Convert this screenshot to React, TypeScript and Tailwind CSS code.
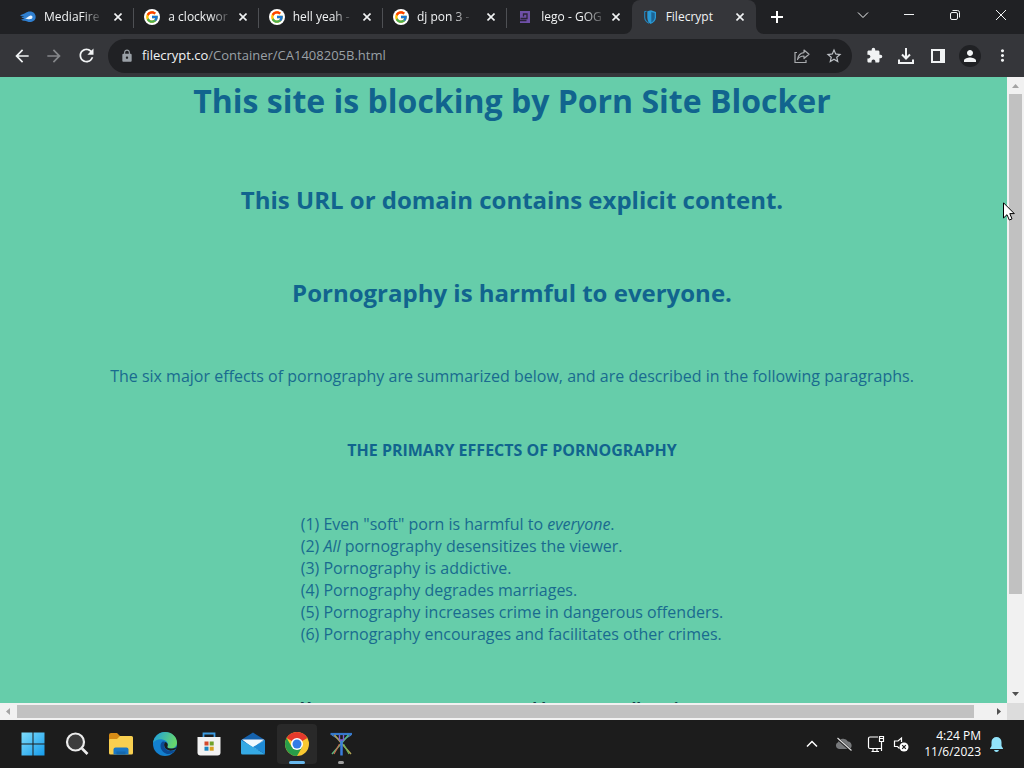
import type { ReactNode } from "react";
import { FcGoogle } from "react-icons/fc";
import {
  MdArrowBack,
  MdArrowForward,
  MdExtension,
  MdLock,
  MdMoreVert,
  MdPerson,
  MdRefresh,
  MdStarOutline,
} from "react-icons/md";

const MediaFireIcon = () => (
  <svg viewBox="0 0 16 16" className="size-4">
    <path d="M0 6.500C2 5 3.500 5.300 5 4.200C8 2 12 1.700 14.500 4.500C17 8 15.500 12.500 11 13C8 13.300 6.500 11.500 4 11.700C2.500 11.800 1.500 11.200 1.300 10.300C2.500 10.400 3.600 9.800 4.200 9C3 9.300 1.800 9 1.300 7.800C2.500 8 3.600 7.500 4.200 7C2.800 7.200 1.500 7 0 6.500Z" fill="#2f7fd0" />
    <path d="M5 9.400C7 9.400 8 7.200 10.500 6.500C12.800 6 13.300 9.500 11 10C8.500 10.500 7 9.700 5 9.400Z" fill="#e8f4ff" />
  </svg>
);

const GoogleIcon = () => (
  <span className="flex size-4 shrink-0 items-center justify-center rounded-full bg-white">
    <FcGoogle size={14} />
  </span>
);

const LegoIcon = () => (
  <svg viewBox="0 0 16 16" className="size-4 shrink-0" fill="none">
    <path d="M3 2H13V14H3Z" fill="#6f50a8" />
    <path d="M6.500 7.500V5H10V9.500H3.500M3 11.500H9.500" stroke="#2b2438" strokeWidth="1.300" />
  </svg>
);

const ShieldIcon = () => (
  <svg viewBox="0 0 16 16" className="size-4">
    <path d="M4.500 2.200L2.700 2.800V8.500C2.800 11 4.500 13 7 14.200" fill="none" stroke="#2384bd" strokeWidth="1.200" />
    <path d="M5.300 2.300L9 1.300L14 3V8.500C13.800 11.500 12 13.600 8.500 15C6.300 13.500 5.300 11 5.300 8.500Z" fill="#2a9ad6" />
    <path d="M9.300 3L12.700 4V8.500C12.500 10.700 11.500 12.300 9.300 13.400Z" fill="#1c6494" />
  </svg>
);

const tabs = [
  { title: "MediaFire", icon: <MediaFireIcon /> },
  { title: "a clockwor", icon: <GoogleIcon /> },
  { title: "hell yeah -", icon: <GoogleIcon /> },
  { title: "dj pon 3 -", icon: <GoogleIcon /> },
  { title: "lego - GOG", icon: <LegoIcon /> },
  { title: "Filecrypt", icon: <ShieldIcon />, active: true },
];

function TabBar() {
  return (
    <div className="flex h-[34px] shrink-0 items-stretch bg-[#202124] pl-2.5 text-xs text-[#f1f3f4]">
      <div role="tablist" className="flex w-[746px]">
        {tabs.map((tab, i) => (
          <div
            key={tab.title}
            role="tab"
            aria-selected={!!tab.active}
            className={
              tab.active
                ? "relative flex min-w-0 flex-1 items-center rounded-t-lg bg-[#35363a] px-2.5"
                : "relative flex min-w-0 flex-1 items-center px-2.5"
            }
          >
            {tab.icon}
            <span
              className={
                tab.active
                  ? "ml-2 whitespace-nowrap"
                  : "ml-2 whitespace-nowrap [mask-image:linear-gradient(to_right,#000_70%,#0003)]"
              }
            >
              {tab.title}
            </span>
            <button aria-label={`Close ${tab.title}`} className="ml-auto flex size-3 items-center justify-center">
              <svg viewBox="0 0 8 8" className="size-2" stroke="#f1f3f4" strokeWidth="1.600">
                <path d="M.5 .5L7.500 7.500M7.500 .5L.5 7.500" />
              </svg>
            </button>
            {i < 4 && <span className="absolute right-0 top-2 h-5 w-px bg-[#4e5054]" />}
            {tab.active && (
              <>
                <svg viewBox="0 0 8 8" className="absolute -left-2 bottom-0 size-2" fill="#35363a">
                  <path d="M8 0V8H0A8 8 0 0 0 8 0Z" />
                </svg>
                <svg viewBox="0 0 8 8" className="absolute -right-2 bottom-0 size-2" fill="#35363a">
                  <path d="M0 0V8H8A8 8 0 0 1 0 0Z" />
                </svg>
              </>
            )}
          </div>
        ))}
      </div>
      <button aria-label="New tab" className="ml-3.5 flex w-3.5 items-center justify-center">
        <svg viewBox="0 0 12 12" className="size-3" stroke="#fff" strokeWidth="2">
          <path d="M6 0V12M0 6H12" />
        </svg>
      </button>
      <div className="ml-auto flex h-[30px]">
        <WindowButton label="Search tabs">
          <path d="M1 3.500L6 8.500L11 3.500" />
        </WindowButton>
        <WindowButton label="Minimize">
          <path d="M1 5.500H11" />
        </WindowButton>
        <WindowButton label="Restore">
          <rect x="1.500" y="3.500" width="7" height="7" rx="1.500" />
          <path d="M3.500 1.500H8.500Q10.500 1.500 10.500 3.500V8.500" />
        </WindowButton>
        <WindowButton label="Close">
          <path d="M1 1L11 11M11 1L1 11" />
        </WindowButton>
      </div>
    </div>
  );
}

function WindowButton({ label, children }: { label: string; children: ReactNode }) {
  return (
    <button aria-label={label} className="flex w-[46px] items-center justify-center">
      <svg viewBox="0 0 12 12" className="size-3" fill="none" stroke="#f1f3f4">
        {children}
      </svg>
    </button>
  );
}

function ToolButton({ label, children }: { label: string; children: ReactNode }) {
  return (
    <button aria-label={label} className="flex h-8 w-8 items-center justify-center">
      {children}
    </button>
  );
}

function Toolbar() {
  return (
    <div className="flex h-[43px] shrink-0 items-center bg-[#35363a] px-1.5 text-[#f1f3f4]">
      <ToolButton label="Back">
        <MdArrowBack size={20} />
      </ToolButton>
      <ToolButton label="Forward">
        <MdArrowForward size={20} className="text-[#85878a]" />
      </ToolButton>
      <ToolButton label="Reload">
        <MdRefresh size={21} />
      </ToolButton>
      <div className="ml-1.5 mr-1.5 flex h-[34px] flex-1 items-center rounded-full bg-[#202124] pl-3 pr-0.5 text-[#9aa0a6]">
        <MdLock size={14} />
        <a href="#url" className="ml-2 flex-1 text-[13px] text-[#9aa0a6]">
          <span className="text-[#f1f3f4]">filecrypt.co</span>/Container/CA1408205B.html
        </a>
        <ToolButton label="Share">
          <svg viewBox="0 0 16 16" className="size-4" fill="none" stroke="#a9abae" strokeWidth="1.200">
            <path d="M3 4.500H1V14.500H12V12" />
            <path d="M10 2L15 6.300L10 10.500V8C7 8 5 9 3.500 11.500C4 7.500 6.500 5 10 4.600Z" strokeLinejoin="round" />
          </svg>
        </ToolButton>
        <ToolButton label="Bookmark">
          <MdStarOutline size={18} className="text-[#bdc1c6]" />
        </ToolButton>
      </div>
      <ToolButton label="Extensions">
        <MdExtension size={17} />
      </ToolButton>
      <ToolButton label="Downloads">
        <svg viewBox="0 0 16 16" className="size-4" fill="none" stroke="currentColor" strokeWidth="2">
          <path d="M8 0V10M4 6.500L8 10.500L12 6.500M1 11.500V15H15V11.500" />
        </svg>
      </ToolButton>
      <ToolButton label="Side panel">
        <svg viewBox="0 0 14 14" className="size-3.5">
          <path d="M0 0H14V14H0ZM2 2V12H9V2Z" fill="currentColor" fillRule="evenodd" />
        </svg>
      </ToolButton>
      <ToolButton label="Profile">
        <span className="flex size-[22px] items-center justify-center rounded-full bg-[#202124]">
          <MdPerson size={18} />
        </span>
      </ToolButton>
      <ToolButton label="Menu">
        <MdMoreVert size={19} />
      </ToolButton>
    </div>
  );
}

function BlockedPage() {
  return (
    <main className="min-w-0 flex-1 overflow-hidden bg-[#66cdaa] text-[#11648e]">
      <div className="w-[calc(100%+17px)] pt-0.5 text-center text-base leading-[22px]">
        <h1 className="text-[32px] font-bold leading-[44px]">This site is blocking by Porn Site Blocker</h1>
        <h2 className="mt-15 text-2xl font-bold leading-[33px]">This URL or domain contains explicit content.</h2>
        <h2 className="mt-15 text-2xl font-bold leading-[33px]">Pornography is harmful to everyone.</h2>
        <p className="mt-14 text-[#196b8f]">
          The six major effects of pornography are summarized below, and are described in the following paragraphs.
        </p>
        <h3 className="mt-[52px] font-bold">THE PRIMARY EFFECTS OF PORNOGRAPHY</h3>
        <div className="mt-[52px] flex justify-center text-left">
          <div>
            <ol className="text-[#196b8f]">
              <li>(1) Even "soft" porn is harmful to <em>everyone</em>.</li>
              <li>(2) <em>All</em> pornography desensitizes the viewer.</li>
              <li>(3) Pornography is addictive.</li>
              <li>(4) Pornography degrades marriages.</li>
              <li>(5) Pornography increases crime in dangerous offenders.</li>
              <li>(6) Pornography encourages and facilitates other crimes.</li>
            </ol>
            <h3 className="mt-[52px] font-bold text-[#12404a]">You can overcome a porn and become well again</h3>
          </div>
        </div>
      </div>
    </main>
  );
}

const Arrow = ({ d, fill }: { d: string; fill: string }) => (
  <svg viewBox="0 0 17 17" className="size-[17px] shrink-0" fill={fill}>
    <path d={d} />
  </svg>
);

function Taskbar() {
  return (
    <footer className="flex h-12 shrink-0 items-center bg-[#1c1c1c] pl-[11px] pr-5 text-white">
      <TaskButton label="Start">
        <svg viewBox="0 0 24 24" className="size-6">
          <defs>
            <linearGradient id="win" x1="0" y1="0" x2="1" y2="1">
              <stop stopColor="#7edcfb" />
              <stop offset="1" stopColor="#159cec" />
            </linearGradient>
          </defs>
          <path d="M.5 .5H11.500V11.500H.5ZM12.500 .5H23.500V11.500H12.500ZM.5 12.500H11.500V23.500H.5ZM12.500 12.500H23.500V23.500H12.500Z" fill="url(#win)" />
        </svg>
      </TaskButton>
      <TaskButton label="Search">
        <svg viewBox="0 0 24 24" className="size-6" stroke="#ececec">
          <circle cx="10.500" cy="10" r="8.500" fill="#3c3c3c" strokeWidth="2.200" />
          <path d="M17 16.500L22.500 22" strokeWidth="2.700" />
        </svg>
      </TaskButton>
      <TaskButton label="File Explorer">
        <svg viewBox="0 0 24 24" className="size-6">
          <path d="M0 3Q0 1 2 1H8L11 4V9H0Z" fill="#d68c16" />
          <path d="M1 7H8L11 4H22.500Q24 4 24 5.500V21Q24 22.500 22.500 22.500H1.500Q0 22.500 0 21V8Q0 7 1 7Z" fill="#f8cf50" />
          <path d="M4.500 22.500V17.500Q4.500 15.500 6.500 15.500H17.500Q19.500 15.500 19.500 17.500V22.500Z" fill="#1977c5" />
          <path d="M7.500 22.500V19.500H16.500V22.500Z" fill="#1568ad" />
        </svg>
      </TaskButton>
      <TaskButton label="Edge">
        <svg viewBox="0 0 24 24" className="size-6">
          <defs>
            <linearGradient id="edgeTop" x1="0" y1="0" x2="1" y2=".3">
              <stop stopColor="#1b9de2" />
              <stop offset="1" stopColor="#66d66e" />
            </linearGradient>
          </defs>
          <circle cx="12" cy="12" r="12" fill="#1380cf" />
          <path d="M0 11C1 4.500 6 0 12 0C19 0 24 5 24 10.500C24 14.500 21 16.500 17.500 16.500C15 16.500 13.700 15.500 14.500 14.300C15.500 12.500 14.700 8.500 9.500 7.500C5.500 6.800 1.500 8.500 0 11Z" fill="url(#edgeTop)" />
          <path d="M9 10C6 13 7.500 20 14 22C17.500 22.500 21 20.500 22.500 18C17 20.500 11.500 18 11 14C10.800 12 11.500 10.700 12.500 10C11.500 9.400 10 9.300 9 10Z" fill="#0c4a94" />
          <path d="M12.500 10C10.500 11.500 10.700 15 13.500 17.300C16.500 19.500 20 18.700 22.500 17.200L24 14.500C22 16.500 20 16.500 17.500 16.500C15 16.500 13.700 15.500 14.500 14.300C15.300 12.500 14.500 10.500 12.500 10Z" fill="#1c1c1c" />
        </svg>
      </TaskButton>
      <TaskButton label="Store">
        <svg viewBox="0 0 24 24" className="size-6">
          <path d="M6.500 6V1.500H17.500V6" fill="none" stroke="#3d9be0" strokeWidth="1.800" />
          <path d="M.5 5H23.500V20.500Q23.500 23.500 20.500 23.500H3.500Q.5 23.500 .5 20.500Z" fill="#f2f2f2" />
          <path d="M7.500 9.500H11.500V13.500H7.500Z" fill="#d2492c" />
          <path d="M12.700 9.500H16.700V13.500H12.700Z" fill="#70a129" />
          <path d="M7.500 14.700H11.500V18.700H7.500Z" fill="#1985c0" />
          <path d="M12.700 14.700H16.700V18.700H12.700Z" fill="#d8a021" />
        </svg>
      </TaskButton>
      <TaskButton label="Mail">
        <svg viewBox="0 0 24 24" className="size-6">
          <path d="M0 8L12 .5L24 8V13H0Z" fill="#1461ac" />
          <path d="M1 7.500H23L12 16Z" fill="#f1f8fd" />
          <path d="M12 16L23 7.500L17 18Z" fill="#b6dcf3" />
          <path d="M0 8L24 22Q23.500 22.500 22.500 22.500H1.500Q0 22.500 0 21Z" fill="#35a9e4" />
          <path d="M24 8L12 15L23.500 22Q24 21.500 24 21Z" fill="#1f8bd6" />
        </svg>
      </TaskButton>
      <TaskButton label="Chrome" active>
        <svg viewBox="0 0 24 24" className="size-6">
          <circle cx="12" cy="12" r="12" fill="#f9c831" />
          <path d="M12 12L1.610 6A12 12 0 0 1 22.390 6Z" fill="#e4392c" />
          <path d="M1.610 6A12 12 0 0 0 12 24L17.200 15L12 12L6.800 15Z" fill="#299d49" />
          <circle cx="12" cy="12" r="6" fill="#fff" />
          <circle cx="12" cy="12" r="4.500" fill="#337be5" />
        </svg>
      </TaskButton>
      <TaskButton label="Tower" running>
        <svg viewBox="0 0 24 24" className="size-6" fill="none" strokeWidth="1.500">
          <path d="M1.500 2H23" stroke="#3478cc" strokeWidth="2.200" />
          <path d="M3 3L9.500 7M22 3L15.500 7" stroke="#4a82c8" strokeWidth="1.200" />
          <path d="M5.500 3L14 13L22 22" stroke="#b4a556" />
          <path d="M19.500 3L11 13L3 22" stroke="#58b982" />
          <path d="M10.500 12L5 22" stroke="#c86a4e" strokeWidth="1.200" />
          <path d="M14.500 12L20 22" stroke="#6bb55b" strokeWidth="1.200" />
          <path d="M12.500 8V23.500" stroke="#397ddc" strokeWidth="2.500" />
          <path d="M10.500 3V8H14.500V3" stroke="#7a63d0" strokeWidth="1.400" />
        </svg>
      </TaskButton>

      <div className="ml-auto flex items-center">
        <button aria-label="Show hidden icons" className="flex w-8 justify-center">
          <svg viewBox="0 0 12 12" className="size-3" fill="none" stroke="#fff" strokeWidth="1.500">
            <path d="M1 8.500L6 3.500L11 8.500" />
          </svg>
        </button>
        <button aria-label="OneDrive" className="flex w-8 justify-center">
          <svg viewBox="0 0 18 16" className="h-4 w-[18px]">
            <path d="M4 13A3.500 3.500 0 0 1 3 6.300A5.500 5.500 0 0 1 13 5.500A4 4 0 0 1 14.500 13Z" fill="#77797b" />
            <path d="M2 2L16 14.500" stroke="#1c1c1c" strokeWidth="2.500" />
            <path d="M2.500 2L16.500 14.500" stroke="#e0e0e0" strokeWidth="1.200" />
          </svg>
        </button>
        <button aria-label="Network" className="flex w-8 justify-center">
          <svg viewBox="0 0 18 18" className="size-[18px]" fill="none" stroke="#fff" strokeWidth="1.200">
            <path d="M11 2H3Q1.500 2 1.500 3.500V12Q1.500 13.500 3 13.500H14M6 13.500V16.500M10 13.500V16.500M4.500 16.500H12" />
            <path d="M12.500 1.500H16.500V6.500H12.500ZM14.500 6.500V16M12.500 3.500H16.500" />
          </svg>
        </button>
        <button aria-label="Volume" className="flex w-[18px] justify-center">
          <svg viewBox="0 0 16 16" className="size-4" fill="none" stroke="#fff" strokeWidth="1.200">
            <path d="M8.500 6V2L5 5H1.500V10.500H4.500L6.500 12.500" />
            <circle cx="11" cy="11" r="4.500" fill="#fff" stroke="none" />
            <path d="M9.200 9.200L12.800 12.800M12.800 9.200L9.200 12.800" stroke="#1c1c1c" />
          </svg>
        </button>
        <time className="ml-3.5 text-right text-[12px] leading-4">
          4:24 PM
          <br />
          11/6/2023
        </time>
        <button aria-label="Notifications" className="ml-2">
          <svg viewBox="0 0 15 16" className="h-4 w-[15px]" fill="#92e3fa">
            <path d="M2.500 6A5 5 0 0 1 12.500 6V10L14 12.500V13H1V12.500L2.500 10ZM5 14H10Q9.500 16 7.500 16T5 14Z" />
          </svg>
        </button>
      </div>
    </footer>
  );
}

function TaskButton({
  label,
  active,
  running,
  children,
}: {
  label: string;
  active?: boolean;
  running?: boolean;
  children: ReactNode;
}) {
  return (
    <button
      aria-label={label}
      className={
        active
          ? "relative mx-0.5 flex size-10 items-center justify-center rounded-sm bg-[#292929]"
          : "relative mx-0.5 flex size-10 items-center justify-center"
      }
    >
      {children}
      {active && <span className="absolute bottom-0 h-[3px] w-4 rounded-full bg-[#68b8ed]" />}
      {running && <span className="absolute bottom-0 h-[3px] w-1.5 rounded-full bg-[#a0a0a0]" />}
    </button>
  );
}

export default function App() {
  return (
    <div className="relative flex h-screen flex-col overflow-hidden font-['Open_Sans',sans-serif]">
      <TabBar />
      <Toolbar />
      <div className="flex min-h-0 flex-1">
        <BlockedPage />
        <div className="flex w-[17px] flex-col bg-[#f1f1f1]">
          <Arrow d="M5 11L8.500 7L12 11Z" fill="#a3a3a3" />
          <div className="min-h-0 flex-1">
            <div className="mx-0.5 h-[84.4%] bg-[#c1c1c1]" />
          </div>
          <Arrow d="M5 6L8.500 10L12 6Z" fill="#505050" />
        </div>
      </div>
      <div className="flex h-[17px] shrink-0 bg-[#f1f1f1]">
        <Arrow d="M10 5L6 8.500L10 12Z" fill="#a3a3a3" />
        <div className="flex min-w-0 flex-1 py-0.5">
          <div className="w-[98.4%] bg-[#c1c1c1]" />
        </div>
        <Arrow d="M7 5L11 8.500L7 12Z" fill="#505050" />
        <div className="w-[17px] bg-[#dcdcdc]" />
      </div>
      <Taskbar />
      <svg viewBox="0 0 12 19" className="absolute right-[9px] top-[202px] h-[19px] w-3" fill="#fff" stroke="#000">
        <path d="M.5 .8V16L4 12.700L6.300 18L9 16.900L6.800 11.600H11.300Z" />
      </svg>
    </div>
  );
}
